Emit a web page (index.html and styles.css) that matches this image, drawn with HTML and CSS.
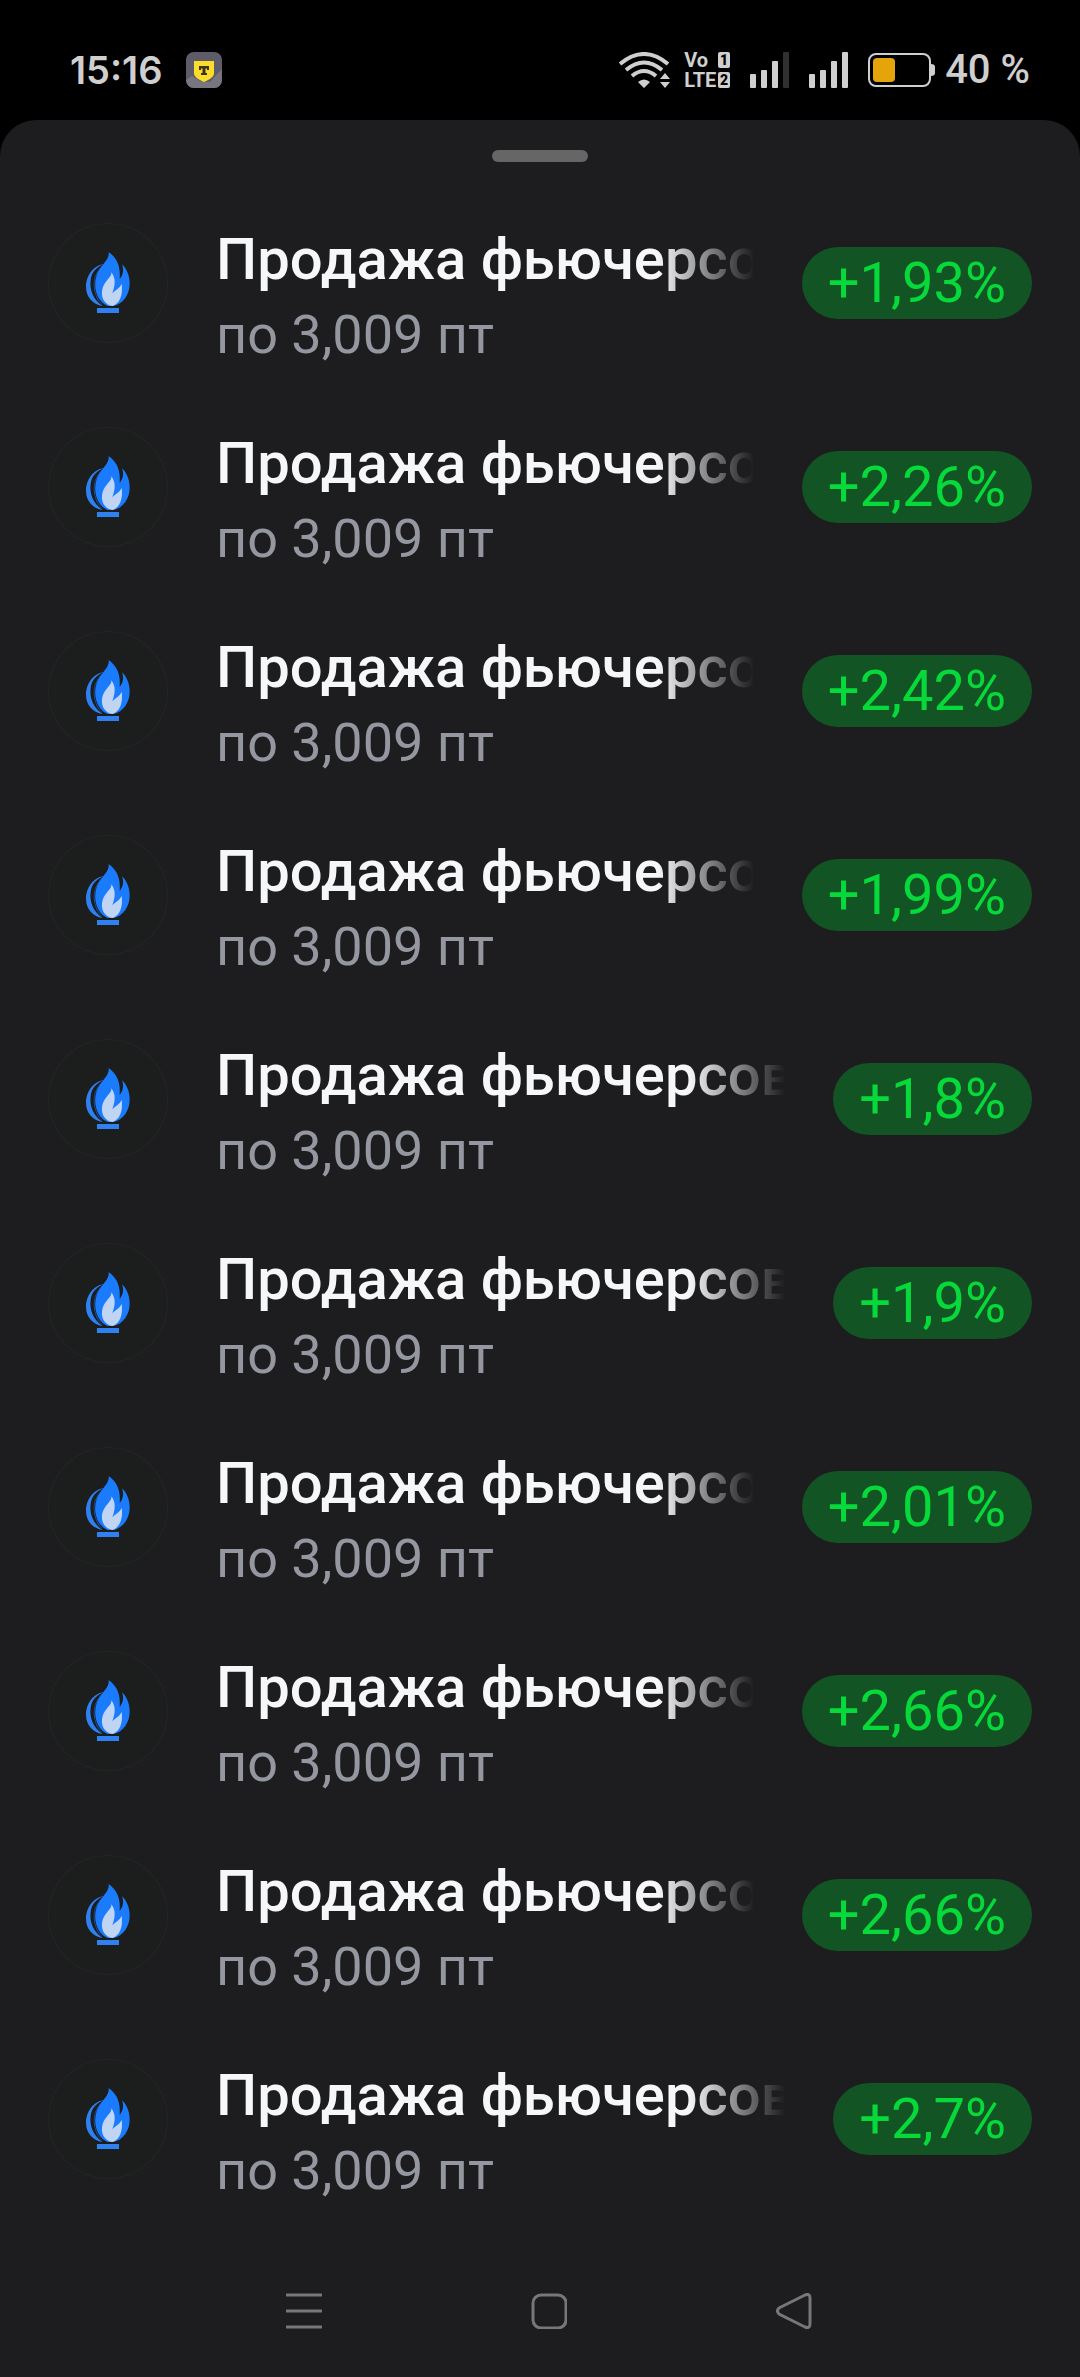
FILE: index.html
```html
<!DOCTYPE html>
<html lang="ru">
<head>
<meta charset="utf-8">
<meta name="viewport" content="width=device-width, initial-scale=1">
<title>Сделки</title>
<link rel="stylesheet" href="styles.css">
</head>
<body>
<svg class="sprite" aria-hidden="true">
  <symbol id="gas" viewBox="54 39 360 360">
    <circle cx="234" cy="219" r="179" fill="#1c1d1d" stroke="#27292c" stroke-width="2"/>
    <path d="M221 163C190 166 168 198 168 230C168 260 187 283 218 288C190 270 178 240 182 210C185 188 197 173 221 163Z" fill="#2f80f0"/>
    <path d="M218 168C192 186 186 222 195 250C200 268 208 280 220 287C202 268 192 243 194 218C196 196 204 182 218 168Z" fill="#1b4f9c"/>
    <path d="M236 126C240 150 210 165 200 195C188 232 200 272 232 288H250C280 282 300 252 299 218C298 195 290 176 276 163C282 180 280 194 269 207C272 170 262 145 236 126Z" fill="#1a7bfc"/>
    <path d="M244 187C247 203 220 213 216 243C213 268 228 285 247 288C268 282 280 255 275 221C270 235 258 237 247 250C256 225 258 205 244 187Z" fill="#bfd5f3"/>
    <rect x="201" y="294" width="66" height="15" fill="#2f80f0"/>
  </symbol>
</svg>
<header class="status">
  <div class="status-group">
    <time class="clock">15:16</time>
    <svg class="app" viewBox="0 0 36 36" aria-hidden="true">
      <rect width="36" height="36" rx="8" fill="#5d5c68"/>
      <path d="M0 28L6 24L14 29L24 30L36 17V28A8 8 0 0 1 28 36H8A8 8 0 0 1 0 28Z" fill="#77767f"/>
      <path d="M8 9H28V21C28 25 24 27 18 30C12 27 8 25 8 21Z" fill="#fcdc2b"/>
      <path d="M13 14H23V18H21V16.500H19.500V21H21V23H15V21H16.500V16.500H15V18H13Z" fill="#3a3420"/>
    </svg>
  </div>
  <div class="status-group status-icons">
    <svg class="wifi" viewBox="0 0 51 36" aria-hidden="true">
      <g fill="none" stroke="#cfcfcf" stroke-width="4">
        <path d="M1 12Q25 -8 49 12"/><path d="M7 18Q25 3 43 18"/><path d="M13 24Q25 14 37 24"/>
      </g>
      <path d="M19 30Q25 25 31 30L25 36ZM41 27L46 21L51 27ZM41 30H51L46 36Z" fill="#cfcfcf"/>
    </svg>
    <div class="volte"><span>Vo</span><b class="sim">1</b><span>LTE</span><b class="sim">2</b></div>
    <svg class="signal" viewBox="0 0 39 36" aria-hidden="true"><g fill="#cfcfcf"><rect y="22" width="6" height="14" rx="1"/><rect x="11" y="18" width="6" height="18" rx="1"/><rect x="22" y="9" width="6" height="27" rx="1"/></g><rect x="33" width="6" height="36" rx="1" fill="#303030"/></svg>
    <svg class="signal" viewBox="0 0 39 36" aria-hidden="true"><g fill="#cfcfcf"><rect y="22" width="6" height="14" rx="1"/><rect x="11" y="18" width="6" height="18" rx="1"/><rect x="22" y="9" width="6" height="27" rx="1"/><rect x="33" width="6" height="36" rx="1"/></g></svg>
    <div class="power">
      <svg class="battery" viewBox="0 0 67 34" aria-hidden="true"><rect x="1" y="1" width="61" height="32" rx="7" fill="none" stroke="#cfcfcf" stroke-width="2"/><rect x="5" y="5" width="22" height="24" rx="4" fill="#e5a50a"/><path d="M63 11Q67 11 67 14V20Q67 23 63 23Z" fill="#cfcfcf"/></svg>
      <span>40 %</span>
    </div>
  </div>
</header>
<main class="sheet">
  <div class="handle"></div>
  <ul class="deals">
    <li class="deal"><svg class="logo" aria-hidden="true"><use href="#gas"/></svg><div class="info"><h2>Продажа фьючерсов</h2><p>по 3,009 пт</p></div><span class="badge">+1,93%</span></li>
    <li class="deal"><svg class="logo" aria-hidden="true"><use href="#gas"/></svg><div class="info"><h2>Продажа фьючерсов</h2><p>по 3,009 пт</p></div><span class="badge">+2,26%</span></li>
    <li class="deal"><svg class="logo" aria-hidden="true"><use href="#gas"/></svg><div class="info"><h2>Продажа фьючерсов</h2><p>по 3,009 пт</p></div><span class="badge">+2,42%</span></li>
    <li class="deal"><svg class="logo" aria-hidden="true"><use href="#gas"/></svg><div class="info"><h2>Продажа фьючерсов</h2><p>по 3,009 пт</p></div><span class="badge">+1,99%</span></li>
    <li class="deal"><svg class="logo" aria-hidden="true"><use href="#gas"/></svg><div class="info"><h2>Продажа фьючерсов</h2><p>по 3,009 пт</p></div><span class="badge">+1,8%</span></li>
    <li class="deal"><svg class="logo" aria-hidden="true"><use href="#gas"/></svg><div class="info"><h2>Продажа фьючерсов</h2><p>по 3,009 пт</p></div><span class="badge">+1,9%</span></li>
    <li class="deal"><svg class="logo" aria-hidden="true"><use href="#gas"/></svg><div class="info"><h2>Продажа фьючерсов</h2><p>по 3,009 пт</p></div><span class="badge">+2,01%</span></li>
    <li class="deal"><svg class="logo" aria-hidden="true"><use href="#gas"/></svg><div class="info"><h2>Продажа фьючерсов</h2><p>по 3,009 пт</p></div><span class="badge">+2,66%</span></li>
    <li class="deal"><svg class="logo" aria-hidden="true"><use href="#gas"/></svg><div class="info"><h2>Продажа фьючерсов</h2><p>по 3,009 пт</p></div><span class="badge">+2,66%</span></li>
    <li class="deal"><svg class="logo" aria-hidden="true"><use href="#gas"/></svg><div class="info"><h2>Продажа фьючерсов</h2><p>по 3,009 пт</p></div><span class="badge">+2,7%</span></li>
  </ul>
  <nav class="system-nav">
    <button type="button" aria-label="Недавние"><svg viewBox="0 0 36 36"><path d="M0 2H36M0 18H36M0 34H36"/></svg></button>
    <button type="button" aria-label="Домой"><svg viewBox="0 0 36 36"><rect x="2" y="2" width="33" height="33" rx="8"/></svg></button>
    <button type="button" aria-label="Назад"><svg viewBox="0 0 36 36"><path d="M3 15L29 2Q34 0 34 5V31Q34 36 29 34L3 21Q0 18 3 15Z"/></svg></button>
  </nav>
</main>
</body>
</html>
```
FILE: styles.css
```css
* { box-sizing: border-box; }
body {
  margin: 0;
  min-height: 100vh;
  display: flex;
  flex-direction: column;
  background: #000;
  font-family: Roboto, "Liberation Sans", sans-serif;
}
.sprite { display: none; }
.status {
  height: 120px;
  padding: 20px 50px 0 70px;
  display: flex;
  justify-content: space-between;
  align-items: center;
  color: #cfcfcf;
}
.status-group { display: flex; align-items: center; gap: 24px; }
.status-icons { gap: 20px; }
.clock { font-family: Inter, sans-serif; font-size: 38px; font-weight: 600; line-height: 40px; }
.app { width: 36px; height: 36px; }
.wifi { width: 51px; height: 36px; margin-right: -6px; }
.volte {
  display: grid;
  grid-template-columns: 34px 12px;
  row-gap: 4px;
  font-size: 20px;
  font-weight: 700;
  line-height: 16px;
}
.sim {
  background: #cfcfcf;
  color: #000;
  font-size: 14px;
  text-align: center;
  border-radius: 2px;
}
.signal { width: 39px; height: 36px; }
.power { display: flex; align-items: center; gap: 10px; font-size: 40px; font-weight: 500; line-height: 40px; }
.battery { width: 67px; height: 34px; }
.sheet {
  flex: 1;
  display: flex;
  flex-direction: column;
  padding-top: 30px;
  background: #1d1d1f;
  border-radius: 36px 36px 0 0;
}
.handle { width: 96px; height: 12px; margin: 0 auto; border-radius: 6px; background: #666; }
.deals { list-style: none; margin: 19px 0 0; padding: 0 48px; }
.deal { display: flex; align-items: center; gap: 48px; height: 204px; }
.logo { flex: none; width: 120px; height: 120px; }
.info { flex: 1; min-width: 0; padding-top: 28px; }
.info h2, .info p { margin: 0; line-height: 76px; white-space: nowrap; }
.info h2 {
  overflow: hidden;
  color: #f6f7f8;
  font-size: 58px;
  font-weight: 500;
  -webkit-mask-image: linear-gradient(to left, transparent, #000 96px);
  mask-image: linear-gradient(to left, transparent, #000 96px);
}
.info p { color: #9496a0; font-size: 54px; }
.badge {
  flex: none;
  padding: 0 26px;
  border-radius: 36px;
  background: #125424;
  color: #08d93b;
  font-size: 56px;
  line-height: 72px;
}
.system-nav { display: flex; justify-content: center; gap: 209px; padding: 72px 0 48px 18px; }
.system-nav button { padding: 0; border: 0; background: none; }
.system-nav svg { display: block; width: 36px; height: 36px; fill: none; stroke: #777; stroke-width: 3; }
```
